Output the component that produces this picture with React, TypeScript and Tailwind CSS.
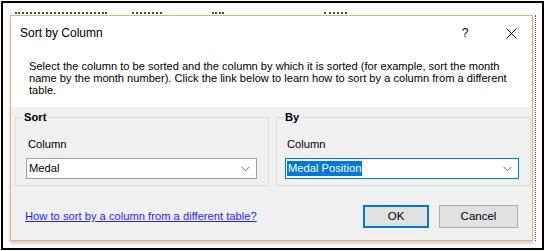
import React from "react";

function Chevron() {
  return (
    <svg width="9" height="6" viewBox="0 0 9 6" className="shrink-0">
      <path d="M0.5 0.8 L4.5 4.8 L8.5 0.8" fill="none" stroke="#6b6b6b" strokeWidth="1" />
    </svg>
  );
}

export default function App() {
  return (
    <div
      className="w-[545px] h-[251px] bg-white p-px overflow-hidden"
      style={{ fontFamily: '"Liberation Sans", Arial, sans-serif' }}
    >
      <div className="border-2 border-black w-[543px] h-[249px] flex flex-col overflow-hidden">
        {/* clipped bottoms of spreadsheet cells above the dialog */}
        <div className="mt-[9px] h-[2px] flex items-start">
          <div className="ml-[12px] w-[92px] border-b-2 border-dotted border-[#4a4a4a]" />
          <div className="ml-[25px] w-[30px] border-b-2 border-dotted border-[#4a4a4a]" />
          <div className="ml-[50px] w-[12px] border-b-2 border-dotted border-[#4a4a4a]" />
          <div className="ml-[100px] w-[23px] border-b-2 border-dotted border-[#4a4a4a]" />
        </div>
        <div className="flex mt-[1px]">
          {/* dialog */}
          <div className="ml-[7px] w-[523px] h-[226px] border border-[#e8b36e] flex flex-col shadow-[0_3px_3px_rgba(0,0,0,0.18)]">
            <div className="bg-white">
              <div className="h-[34px] flex items-center pl-[9px] text-[12px] text-black">
                <span className="flex-1">Sort by Column</span>
                <span className="w-[12px] text-center mr-[35px] text-[12px]">?</span>
                <svg width="11" height="11" viewBox="0 0 11 11" className="mr-[15px]">
                  <path d="M0.5 0.5 L10.5 10.5 M10.5 0.5 L0.5 10.5" stroke="#111" strokeWidth="1" fill="none" />
                </svg>
              </div>
              <div className="pt-[10px] pb-[11px] pl-[18px] text-[11.1px] leading-[12px] text-black whitespace-nowrap">
                Select the column to be sorted and the column by which it is sorted (for example, sort the month
                <br />
                name by the month number). Click the link below to learn how to sort by a column from a different
                <br />
                table.
              </div>
            </div>
            <div className="flex-1 bg-[#f0f0f0] flex flex-col text-[11.2px] text-black">
              <div className="flex pt-[4px] pl-[4px] gap-[7px]">
                <fieldset className="w-[254px] border border-[#dcdcdc] pb-[6px]">
                  <legend className="ml-[7px] px-[1px] font-bold leading-[13px]">Sort</legend>
                  <div className="mt-[14px] ml-[12px] leading-[13px] h-[13px]">Column</div>
                  <div className="mt-[7px] ml-[10px] w-[231px] h-[21px] bg-white border border-[#a2a2a2] flex items-center pl-[2px] pr-[6px]">
                    <span className="flex-1 leading-[13px]">Medal</span>
                    <Chevron />
                  </div>
                </fieldset>
                <fieldset className="w-[255px] border border-[#dcdcdc] pb-[6px]">
                  <legend className="ml-[7px] px-[1px] font-bold leading-[13px]">By</legend>
                  <div className="mt-[14px] ml-[10px] leading-[13px] h-[13px]">Column</div>
                  <div className="mt-[7px] ml-[8px] w-[234px] h-[21px] bg-white border border-[#0078d7] flex items-center pl-[1px] pr-[6px]">
                    <span className="flex-1 flex">
                      <span className="bg-[#0078d7] text-white leading-[15px] px-[1px]">Medal Position</span>
                    </span>
                    <Chevron />
                  </div>
                </fieldset>
              </div>
              <div className="mt-[19px] flex items-center pl-[14px] pr-[14px]">
                <span className="flex-1 text-[#2b1cff] underline text-[11.2px] leading-[13px]">
                  How to sort by a column from a different table?
                </span>
                <div className="w-[66px] h-[23px] bg-[#e1e1e1] border-2 border-[#0078d7] flex items-center justify-center text-[11.5px]">
                  OK
                </div>
                <div className="ml-[10px] w-[79px] h-[23px] bg-[#e1e1e1] border border-[#adadad] flex items-center justify-center text-[11.5px]">
                  Cancel
                </div>
              </div>
            </div>
          </div>
          {/* dotted gridline right of dialog */}
          <div className="ml-[2px] h-[226px] border-l border-dotted border-[#555]" />
        </div>
      </div>
    </div>
  );
}
